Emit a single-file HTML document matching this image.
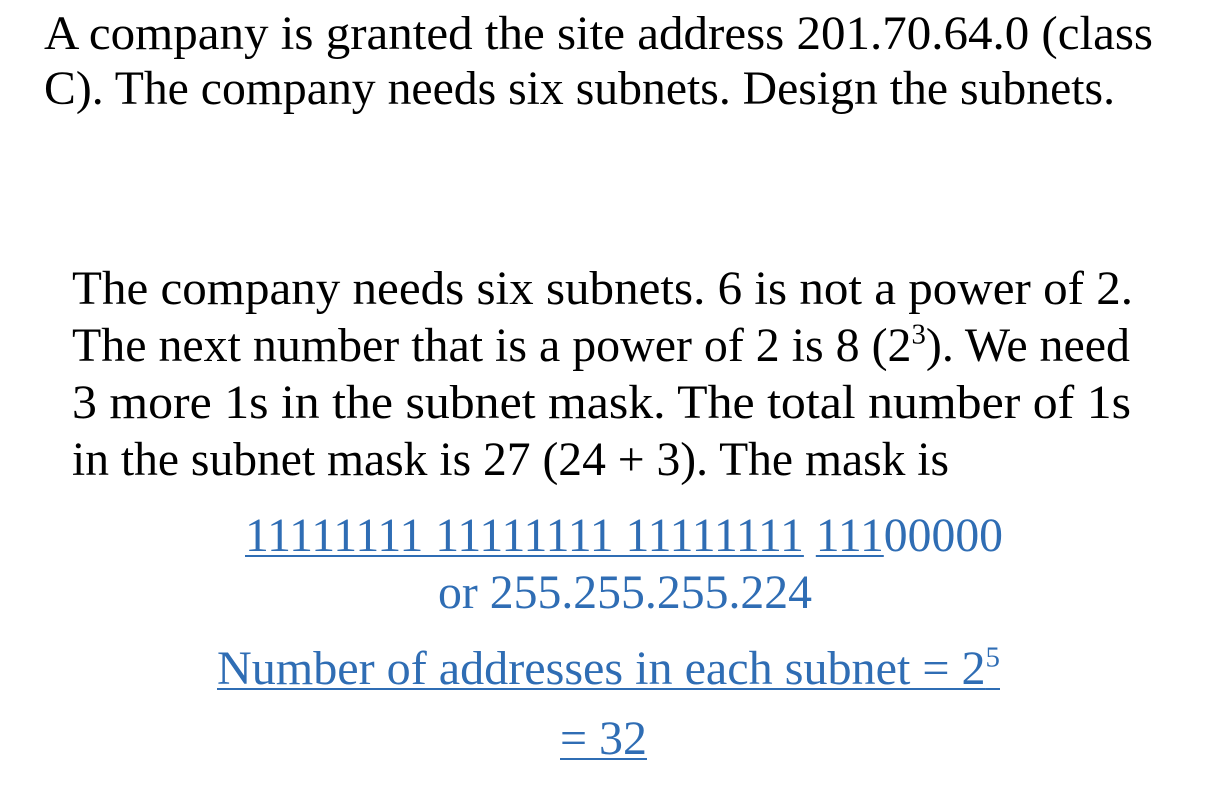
<!DOCTYPE html>
<html><head><meta charset="utf-8"><style>
html,body{margin:0;padding:0;background:#fff;width:1212px;height:812px;overflow:hidden}
.l{position:absolute;white-space:nowrap;font-family:"Liberation Serif",serif;font-size:48px;line-height:48px;color:#000;transform-origin:0 0}
.b{color:#2f6db4}
.u{text-decoration:underline;text-decoration-thickness:2px;text-underline-offset:4px}
sup{font-size:0.6em;line-height:0;vertical-align:0.6em}
</style></head><body>
<div class="l" id="a1" style="left:44px;top:10px">A company is granted the site address 201.70.64.0 (class</div>
<div class="l" id="a2" style="left:44px;top:65px">C). The company needs six subnets. Design the subnets.</div>
<div class="l" id="a3" style="left:72px;top:265px">The company needs six subnets. 6 is not a power of 2.</div>
<div class="l" id="a4" style="left:72px;top:322px">The next number that is a power of 2 is 8 (2<sup>3</sup>). We need</div>
<div class="l" id="a5" style="left:72px;top:379px">3 more 1s in the subnet mask. The total number of 1s</div>
<div class="l" id="a6" style="left:72px;top:436px">in the subnet mask is 27 (24 + 3). The mask is</div>
<div class="l b" id="a7" style="left:245px;top:512px"><span class="u">11111111 11111111 11111111</span> <span class="u">111</span>00000</div>
<div class="l b" id="a8" style="left:438px;top:569px">or 255.255.255.224</div>
<div class="l b u" id="a9" style="left:217px;top:645px">Number of addresses in each subnet = 2<sup>5</sup></div>
<div class="l b u" id="a10" style="left:560px;top:715px">= 32</div>
<script>
var W={a1:1109,a2:1071,a3:1061,a4:1058,a5:1059,a6:877,a7:758,a8:374,a9:783,a10:87};
for(var k in W){var e=document.getElementById(k);var w=e.getBoundingClientRect().width;if(w>0)e.style.transform='scaleX('+(W[k]/w)+')';}
</script>
</body></html>
